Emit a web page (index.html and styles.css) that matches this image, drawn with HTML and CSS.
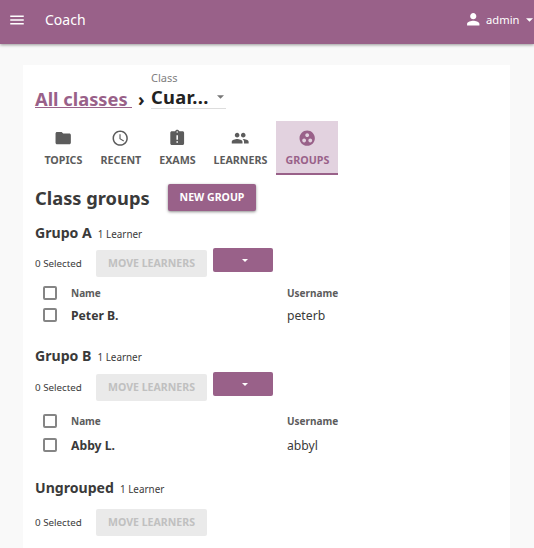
FILE: index.html
```
<!DOCTYPE html>
<html lang="en">
<head>
<meta charset="utf-8">
<title>Coach</title>
<link rel="stylesheet" href="styles.css">
</head>
<body>
<header class="appbar">
  <svg class="menu-icon" viewBox="0 0 24 24"><path d="M3 18h18v-2H3v2zm0-5h18v-2H3v2zm0-7v2h18V6H3z"/></svg>
  <span class="title">Coach</span>
  <div class="user">
    <svg class="user-icon" viewBox="0 0 24 24"><path d="M12 12c2.21 0 4-1.79 4-4s-1.790-4-4-4-4 1.790-4 4 1.790 4 4 4zm0 2c-2.670 0-8 1.340-8 4v2h16v-2c0-2.660-5.330-4-8-4z"/></svg>
    <span class="user-name">admin</span>
    <svg class="user-caret" viewBox="0 0 8 4"><path d="M0 0h8L4 4z"/></svg>
  </div>
</header>
<main class="card">
  <nav class="crumbs">
    <a class="crumb-link">All classes </a>
    <span class="crumb-sep">›</span>
    <div class="select">
      <div class="select-label">Class</div>
      <div class="select-value"><span>Cuar...</span><svg class="select-caret" viewBox="0 0 8 4"><path d="M0 0h8L4 4z"/></svg></div>
    </div>
  </nav>
  <nav class="tabs">
    <a class="tab topics"><svg viewBox="0 0 24 24"><path d="M10 4H4c-1.100 0-1.990.9-1.990 2L2 18c0 1.100.9 2 2 2h16c1.100 0 2-.9 2-2V8c0-1.100-.9-2-2-2h-8l-2-2z"/></svg><span>TOPICS</span></a>
    <a class="tab recent"><svg viewBox="0 0 24 24"><path d="M11.990 2C6.470 2 2 6.480 2 12s4.470 10 9.990 10C17.520 22 22 17.520 22 12S17.520 2 11.990 2zM12 20c-4.420 0-8-3.580-8-8s3.580-8 8-8 8 3.580 8 8-3.580 8-8 8zm.5-13H11v6l5.250 3.150.75-1.230-4.500-2.670z"/></svg><span>RECENT</span></a>
    <a class="tab exams"><svg viewBox="0 0 24 24"><path d="M19 3h-4.180C14.400 1.840 13.300 1 12 1c-1.300 0-2.400.84-2.820 2H5c-1.100 0-2 .9-2 2v14c0 1.100.9 2 2 2h14c1.100 0 2-.9 2-2V5c0-1.100-.9-2-2-2zm-6 15h-2v-2h2v2zm0-4h-2V8h2v6zm-1-9c-.55 0-1-.45-1-1s.45-1 1-1 1 .45 1 1-.45 1-1 1z"/></svg><span>EXAMS</span></a>
    <a class="tab learners"><svg viewBox="0 0 24 24"><path d="M16 11c1.660 0 2.990-1.340 2.990-3S17.660 5 16 5c-1.660 0-3 1.340-3 3s1.340 3 3 3zm-8 0c1.660 0 2.990-1.340 2.990-3S9.660 5 8 5C6.340 5 5 6.340 5 8s1.340 3 3 3zm0 2c-2.330 0-7 1.170-7 3.500V19h14v-2.500c0-2.330-4.670-3.500-7-3.500zm8 0c-.29 0-.62.020-.97.050 1.160.84 1.970 1.970 1.970 3.450V19h6v-2.500c0-2.330-4.670-3.500-7-3.500z"/></svg><span>LEARNERS</span></a>
    <a class="tab groups active"><svg viewBox="0 0 24 24"><path d="M12 2C6.480 2 2 6.480 2 12s4.480 10 10 10 10-4.480 10-10S17.520 2 12 2zM8 17.500c-1.380 0-2.500-1.120-2.500-2.500s1.120-2.500 2.500-2.500 2.500 1.120 2.500 2.500-1.120 2.500-2.500 2.500zM9.500 8c0-1.380 1.120-2.500 2.500-2.500s2.500 1.120 2.500 2.500-1.120 2.500-2.500 2.500S9.500 9.380 9.500 8zm6.500 9.500c-1.380 0-2.500-1.120-2.500-2.500s1.120-2.500 2.500-2.500 2.500 1.120 2.500 2.500-1.120 2.500-2.500 2.500z"/></svg><span>GROUPS</span></a>
  </nav>
  <div class="heading">
    <h1>Class groups</h1>
    <button class="btn primary">NEW GROUP</button>
  </div>

  <section class="group group-a">
    <div class="group-head"><h2>Grupo A</h2><span class="count">1 Learner</span></div>
    <div class="actions">
      <span class="selected">0 Selected</span>
      <button class="btn disabled">MOVE LEARNERS</button>
      <button class="btn dropdown"><svg viewBox="0 0 6 3"><path d="M0 0h6L3 3z"/></svg></button>
    </div>
    <div class="row head"><i class="check"></i><span>Name</span><span>Username</span></div>
    <div class="row"><i class="check"></i><b>Peter B.</b><span>peterb</span></div>
  </section>

  <section class="group group-b">
    <div class="group-head"><h2>Grupo B</h2><span class="count">1 Learner</span></div>
    <div class="actions">
      <span class="selected">0 Selected</span>
      <button class="btn disabled">MOVE LEARNERS</button>
      <button class="btn dropdown"><svg viewBox="0 0 6 3"><path d="M0 0h6L3 3z"/></svg></button>
    </div>
    <div class="row head"><i class="check"></i><span>Name</span><span>Username</span></div>
    <div class="row"><i class="check"></i><b>Abby L.</b><span>abbyl</span></div>
  </section>

  <section class="group ungrouped">
    <div class="group-head"><h2>Ungrouped</h2><span class="count">1 Learner</span></div>
    <div class="actions">
      <span class="selected">0 Selected</span>
      <button class="btn disabled">MOVE LEARNERS</button>
    </div>
  </section>
</main>
</body>
</html>
```
FILE: styles.css
```
* { box-sizing: border-box; }
html, body { height: 100%; }
body {
  margin: 0;
  background: #f9f9f9;
  color: #3a3a3a;
  font-family: "Noto Sans", sans-serif;
  font-size: 12px;
  overflow: hidden;
}
svg { display: block; fill: currentColor; flex: none; }
h1, h2 { margin: 0; font-weight: 700; white-space: nowrap; }

.appbar {
  height: 44px;
  display: flex;
  align-items: center;
  padding: 0 2px 4px 8px;
  background: #996189;
  color: #fff;
  box-shadow: 0 1px 3px rgba(0, 0, 0, .4);
}
.menu-icon { width: 18px; height: 18px; margin-top: -1px; }
.title { margin-left: 19px; font-size: 14px; line-height: 20px; }
.user { margin-left: auto; display: flex; align-items: center; font-size: 11.2px; }
.user-icon { width: 18.5px; height: 18.5px; margin: -2px 4px 0 0; }
.user-name { line-height: 16px; margin-top: -1px; }
.user-caret { width: 7px; height: 4px; margin: 0 -.5px 0 6px; }

.card {
  width: 487px;
  height: 483px;
  margin: 21px 0 0 23px;
  padding-left: 12px;
  background: #fff;
  overflow: hidden;
}

.crumbs { display: flex; height: 56px; }
.crumb-link {
  width: 97px;
  height: 21px;
  margin-top: 22px;
  border-bottom: 1px solid #996189;
  color: #996189;
  font-size: 18.3px;
  font-weight: 700;
  line-height: 24px;
  white-space: pre;
}
.crumb-sep { width: 19px; padding-left: 6px; margin-top: 22px; color: #222; font-size: 18px; font-weight: 700; line-height: 24px; }
.select { width: 75px; height: 44px; padding-top: 5px; border-bottom: 1px solid #ddd; }
.select-label { color: #808080; font-size: 11px; line-height: 15px; }
.select-value { display: flex; align-items: center; color: #222; font-size: 18.3px; letter-spacing: .35px; font-weight: 700; line-height: 23px; }
.select-caret { width: 7px; height: 4px; margin: 0 2px 0 auto; color: #777; }

.tabs { display: flex; height: 54px; }
.tab {
  display: flex;
  flex-direction: column;
  align-items: center;
  padding-top: 8px;
  color: #5c5c5c;
  font-size: 10.7px;
  font-weight: 700;
}
.tab svg { width: 18.4px; height: 18.4px; margin-bottom: -.4px; }
.tab span { margin-top: 5px; padding-left: .8px; line-height: 16px; }
.topics { width: 56px; }
.recent { width: 59px; }
.exams { width: 54px; }
.learners { width: 72px; }
.groups { width: 62px; }
.active { color: #996189; background: #e2d2df; border-bottom: 2px solid #996189; }

.heading { display: flex; align-items: center; height: 27px; margin-top: 9px; }
.heading h1 { width: 133px; margin-top: -1px; font-size: 18.3px; line-height: 27px; }
.btn {
  display: flex;
  align-items: center;
  justify-content: center;
  height: 27px;
  padding: 0 0 1px;
  border: 0;
  border-radius: 2px;
  font: 700 10.55px/16px "Noto Sans", sans-serif;
}
.primary { width: 88px; background: #996189; color: #fff; box-shadow: 0 1px 3px rgba(0, 0, 0, .45); }
.disabled { width: 111px; background: #eaeaea; color: #c0c0c0; }
.dropdown { width: 60px; height: 24px; margin-left: 6px; padding: 0 0 0 4px; background: #996189; color: #fff; }
.dropdown svg { width: 6px; height: 3px; }

.group-head { display: flex; align-items: baseline; height: 20px; }
.group-head h2 { font-size: 14.1px; line-height: 20px; }
.count { margin-left: 6px; font-size: 9.9px; }
.actions { display: flex; align-items: flex-start; height: 29px; }
.actions .disabled { margin-top: 2px; }
.selected { width: 61px; margin-top: 9px; font-size: 9.8px; line-height: 14px; }
.row {
  display: grid;
  grid-template-columns: 36px 216px 1fr;
  align-items: center;
  height: 22px;
  font-size: 12.2px;
}
.head { font-size: 10px; font-weight: 700; color: #5c5c5c; }
.check { width: 14px; height: 14px; margin-left: 8px; border: 2px solid #858585; border-radius: 2px; }

.group-a { margin-top: 12px; height: 123px; }
.group-a .actions { margin-top: 5px; }
.group-a .head { margin-top: 5px; }
.group-b { height: 132px; }
.group-b .actions { margin-top: 6px; }
.group-b .head { margin-top: 8px; }
.group-b .row { height: 24px; }
.ungrouped .actions { margin-top: 9px; }
```
